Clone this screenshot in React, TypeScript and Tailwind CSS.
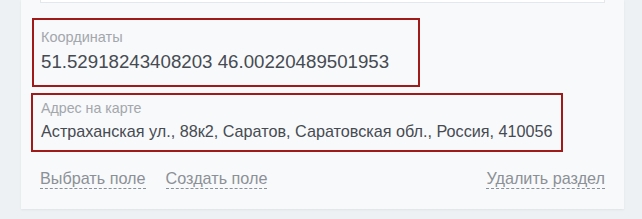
import React from "react";

export default function App() {
  return (
    <div
      className="w-[642px] h-[219px] bg-[#eef1f4] overflow-hidden"
      style={{ fontFamily: '"Liberation Sans", Arial, sans-serif' }}
    >
      <div className="ml-[21px] w-[603px] h-[209px] bg-[#f8f9fb] shadow-[0_1px_2px_rgba(0,0,0,0.06)] flex flex-col">
        <div className="mx-[19px] h-[3px] bg-white border border-t-0 border-[#e4e7eb]" />
        <div className="mt-[15px] ml-[11px] w-[388px] h-[69px] border-2 border-[#a11a1a] pl-[7px] pt-[9px] flex flex-col">
          <div className="text-[14.5px] leading-[16px] text-[#a3a7ac]">Координаты</div>
          <div className="mt-[6px] text-[18.7px] leading-[22px] text-[#464b52]">
            51.52918243408203 46.00220489501953
          </div>
        </div>
        <div className="mt-[6px] ml-[10px] w-[532px] h-[59px] border-2 border-[#a11a1a] pl-[8px] pt-[5px] flex flex-col">
          <div className="text-[14.2px] leading-[16px] text-[#a3a7ac]">Адрес на карте</div>
          <div className="mt-[6px] text-[16.2px] leading-[19px] text-[#464b52]">
            Астраханская ул., 88к2, Саратов, Саратовская обл., Россия, 410056
          </div>
        </div>
        <div className="mt-[17px] mx-[19px] flex items-start text-[16.2px] leading-[19px] text-[#8b9096]">
          <span className="border-b border-dashed border-[#8b9096]">Выбрать поле</span>
          <span className="ml-[20px] border-b border-dashed border-[#8b9096]">Создать поле</span>
          <span className="ml-auto border-b border-dashed border-[#8b9096]">Удалить раздел</span>
        </div>
      </div>
    </div>
  );
}
